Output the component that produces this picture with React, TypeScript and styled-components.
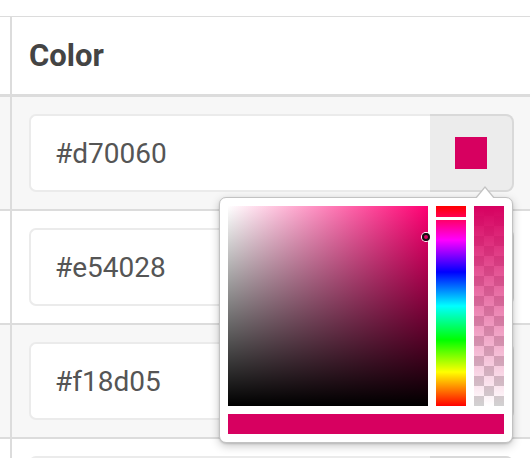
import styled, { createGlobalStyle } from 'styled-components';

const GlobalStyle = createGlobalStyle`
  body {
    margin: 0;
    background: #fff;
    font-family: Roboto, "Liberation Sans", sans-serif;
  }
`;

const Page = styled.div`
  width: 530px;
  height: 458px;
  overflow: hidden;
  padding-top: 16px;
  box-sizing: border-box;
`;

const Table = styled.div`
  border-top: 1px solid #dcdcdc;
`;

const Row = styled.div<{ striped?: boolean; header?: boolean }>`
  display: grid;
  grid-template-columns: 12px 1fr;
  background: ${(p) => (p.striped ? '#f7f7f7' : '#fff')};
  border-bottom: ${(p) => (p.header ? '3px' : '2px')} solid #dcdcdc;
`;

const SideCell = styled.div`
  border-right: 2px solid #dcdcdc;
`;

const HeaderCell = styled.div`
  height: 77px;
  display: flex;
  align-items: center;
  padding-left: 17px;
  font-size: 31px;
  font-weight: 700;
  color: #444;
`;

const Cell = styled.div`
  padding: 17px 16px 17px 17px;
`;

const InputGroup = styled.div`
  position: relative;
  display: flex;
  height: 78px;
`;

const TextInput = styled.div`
  flex: 1;
  display: flex;
  align-items: center;
  padding-left: 24px;
  background: #fff;
  border: 2px solid #ebebeb;
  border-right: none;
  border-radius: 7px 0 0 7px;
  font-size: 28px;
  color: #555;
`;

const SwatchButton = styled.div`
  width: 84px;
  display: flex;
  align-items: center;
  justify-content: center;
  background: #ececec;
  border: 2px solid #d9d9d9;
  border-left: none;
  border-radius: 0 8px 8px 0;
  box-sizing: border-box;
`;

const Swatch = styled.div<{ color: string }>`
  width: 32px;
  height: 32px;
  background: ${(p) => p.color};
`;

const Popover = styled.div`
  position: absolute;
  z-index: 10;
  top: calc(100% + 5px);
  right: 1px;
  width: 294px;
  box-sizing: border-box;
  padding: 8px;
  background: #fff;
  border: 1px solid #c2c2c2;
  border-radius: 7px;
  box-shadow: 0 3px 10px rgba(0, 0, 0, 0.22), 0 1px 2px rgba(0, 0, 0, 0.15);

  &::before,
  &::after {
    content: '';
    position: absolute;
    width: 0;
    height: 0;
    border-style: solid;
    border-color: transparent;
  }
  &::before {
    top: -12px;
    right: 17px;
    border-width: 0 10px 12px 10px;
    border-bottom-color: #c2c2c2;
  }
  &::after {
    top: -10px;
    right: 18px;
    border-width: 0 9px 11px 9px;
    border-bottom-color: #fff;
  }
`;

const PickerBody = styled.div`
  display: flex;
  gap: 8px;
  height: 200px;
`;

const Saturation = styled.div<{ hue: number }>`
  position: relative;
  width: 200px;
  height: 200px;
  background: linear-gradient(to top, #000, rgba(0, 0, 0, 0)),
    linear-gradient(to right, #fff, hsl(${(p) => p.hue}, 100%, 50%));
`;

const Pointer = styled.div`
  position: absolute;
  width: 4px;
  height: 4px;
  margin: -4px 0 0 -4px;
  border: 2px solid #111;
  border-radius: 50%;
  box-shadow: 0 0 0 1px #fff;
`;

const HueBar = styled.div`
  position: relative;
  width: 30px;
  background: linear-gradient(
    to bottom,
    #f00 0%,
    #f0f 17%,
    #00f 33%,
    #0ff 50%,
    #0f0 67%,
    #ff0 83%,
    #f00 100%
  );
`;

const BarMarker = styled.div`
  position: absolute;
  left: 0;
  right: 0;
  height: 3px;
  background: #fff;
`;

const AlphaBar = styled.div<{ color: string }>`
  width: 30px;
  background: linear-gradient(to bottom, ${(p) => p.color}, ${(p) => p.color}00),
    conic-gradient(#d2d2d2 25%, #fff 0 50%, #d2d2d2 0 75%, #fff 0) 0 0 / 20px 20px;
`;

const Preview = styled.div<{ color: string }>`
  margin-top: 8px;
  height: 20px;
  background: ${(p) => p.color};
`;

const rows = ['#d70060', '#e54028', '#f18d05', '#f2b705'];

function ColorPicker({ color }: { color: string }) {
  return (
    <Popover>
      <PickerBody>
        <Saturation hue={333}>
          <Pointer style={{ left: 198, top: 31 }} />
        </Saturation>
        <HueBar>
          <BarMarker style={{ top: 11 }} />
        </HueBar>
        <AlphaBar color={color} />
      </PickerBody>
      <Preview color={color} />
    </Popover>
  );
}

export default function App() {
  return (
    <Page>
      <GlobalStyle />
      <Table>
        <Row header>
          <SideCell />
          <HeaderCell>Color</HeaderCell>
        </Row>
        {rows.map((c, i) => (
          <Row key={c} striped={i % 2 === 0}>
            <SideCell />
            <Cell>
              <InputGroup>
                <TextInput>{c}</TextInput>
                <SwatchButton>
                  <Swatch color={c} />
                </SwatchButton>
                {i === 0 && <ColorPicker color={c} />}
              </InputGroup>
            </Cell>
          </Row>
        ))}
      </Table>
    </Page>
  );
}
